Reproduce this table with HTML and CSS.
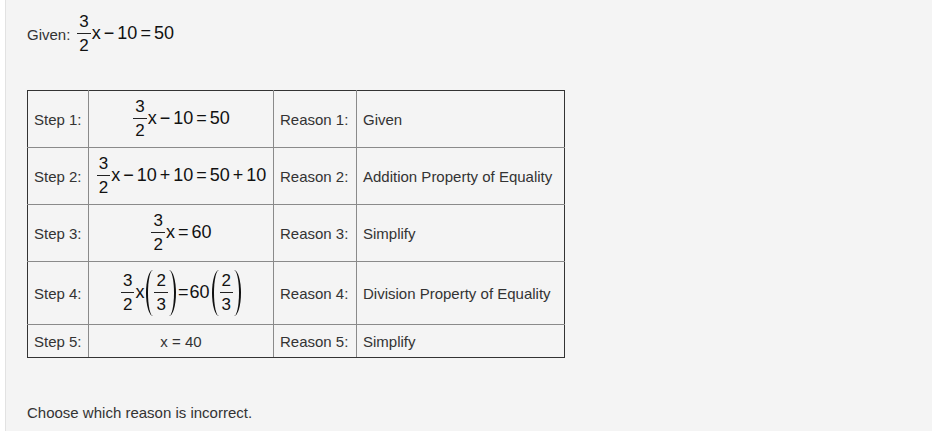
FILE: index.html
```html
<!DOCTYPE html>
<html>
<head>
<meta charset="utf-8">
<link rel="stylesheet" href="styles.css">
</head>
<body>
<div class="panel">
  <div class="given">
    <span class="label">Given:</span>
    <span class="math"><span class="frac"><span class="num">3</span><span class="den">2</span></span>x<span class="op">−</span>10<span class="op">=</span>50</span>
  </div>
  <table class="proof">
    <colgroup><col class="c1"><col class="c2"><col class="c3"><col class="c4"></colgroup>
    <tr class="r-mid">
      <td>Step 1:</td>
      <td class="eq"><span class="math"><span class="frac"><span class="num">3</span><span class="den">2</span></span>x<span class="op">−</span>10<span class="op">=</span>50</span></td>
      <td>Reason 1:</td>
      <td>Given</td>
    </tr>
    <tr class="r-mid">
      <td>Step 2:</td>
      <td class="eq"><span class="math"><span class="frac"><span class="num">3</span><span class="den">2</span></span>x<span class="op">−</span>10<span class="op">+</span>10<span class="op">=</span>50<span class="op">+</span>10</span></td>
      <td>Reason 2:</td>
      <td>Addition Property of Equality</td>
    </tr>
    <tr class="r-mid">
      <td>Step 3:</td>
      <td class="eq"><span class="math"><span class="frac"><span class="num">3</span><span class="den">2</span></span>x<span class="op">=</span>60</span></td>
      <td>Reason 3:</td>
      <td>Simplify</td>
    </tr>
    <tr class="r-tall">
      <td>Step 4:</td>
      <td class="eq"><span class="math"><span class="frac"><span class="num">3</span><span class="den">2</span></span>x<span class="paren lp"></span><span class="frac"><span class="num">2</span><span class="den">3</span></span><span class="paren rp"></span><span class="op tight">=</span>60<span class="paren lp"></span><span class="frac"><span class="num">2</span><span class="den">3</span></span><span class="paren rp"></span></span></td>
      <td>Reason 4:</td>
      <td>Division Property of Equality</td>
    </tr>
    <tr class="r-short">
      <td>Step 5:</td>
      <td class="eq plain">x = 40</td>
      <td>Reason 5:</td>
      <td>Simplify</td>
    </tr>
  </table>
  <p class="prompt">Choose which reason is incorrect.</p>
</div>
</body>
</html>
```
FILE: styles.css
```css
html, body {
  margin: 0;
  padding: 0;
  background: #ffffff;
}
body {
  font-family: "Liberation Sans", Arial, sans-serif;
  font-size: 15px;
  color: #333333;
}
.panel {
  margin-left: 5px;
  border-left: 1px solid #e2e2e2;
  background: #f4f4f4;
  height: 431px;
  box-sizing: border-box;
  padding: 14px 21px 0 21px;
}
.given {
  display: flex;
  align-items: center;
  height: 40px;
}
.given .label {
  margin-right: 6px;
}
.math {
  font-size: 18px;
  color: #111;
  white-space: nowrap;
}
.op {
  margin: 0 3px;
}
.op.tight {
  margin: 0 1px;
}
.frac {
  display: inline-flex;
  flex-direction: column;
  align-items: stretch;
  vertical-align: middle;
  font-size: 17px;
  line-height: 16px;
  text-align: center;
  margin: 0 1px;
}
.frac .num {
  padding: 0 2px 3px;
  border-bottom: 1px solid #222;
}
.frac .den {
  padding-top: 4px;
}
.paren {
  display: inline-block;
  width: 7px;
  height: 46px;
  vertical-align: middle;
  box-sizing: border-box;
  border: 0 solid #111;
}
.paren.lp {
  border-left-width: 2px;
  border-radius: 100% 0 0 100% / 50% 0 0 50%;
  margin-left: 2px;
}
.paren.rp {
  border-right-width: 2px;
  border-radius: 0 100% 100% 0 / 0 50% 50% 0;
  margin-right: 1px;
}
.proof {
  margin-top: 36px;
  border-collapse: collapse;
  table-layout: fixed;
  width: 537px;
  border: 1px solid #333;
}
.c1 { width: 61px; }
.c2 { width: 185px; }
.c3 { width: 83px; }
.c4 { width: 208px; }
.proof td {
  border: 1px solid #8a8a8a;
  padding: 0 6px;
  white-space: nowrap;
}
.proof tr:first-child td { border-top-color: #333; }
.proof tr:last-child td { border-bottom-color: #333; }
.proof td:first-child { border-left-color: #333; }
.proof td:last-child { border-right-color: #333; }
.proof td.eq {
  text-align: center;
  padding: 0 2px;
}
.proof td.plain {
  color: #333;
  font-size: 15px;
}
.r-mid td { height: 56px; }
.r-tall td { height: 62px; }
.r-short td { height: 32px; }
.prompt {
  margin: 46px 0 0 0;
}
```
